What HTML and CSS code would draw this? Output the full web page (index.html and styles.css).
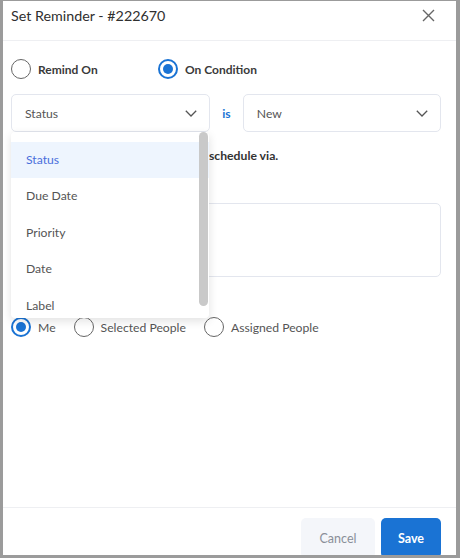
FILE: index.html
```html
<!DOCTYPE html>
<html lang="en">
<head>
    <meta charset="UTF-8">
    <meta name="viewport" content="width=device-width, initial-scale=1.0">
    <title>Set Reminder</title>
    <link rel="stylesheet" href="styles.css">
</head>
<body>
    <div class="modal">
        <div class="modal-header">
            <h2 class="modal-title">Set Reminder - #222670</h2>
            <button class="close-btn" aria-label="Close">
                <svg width="13" height="13" viewBox="0 0 13 13"><path d="M1 1 L12 12 M12 1 L1 12" stroke="#666" stroke-width="1.4" fill="none"/></svg>
            </button>
        </div>

        <div class="modal-body">
            <div class="radio-row top-row">
                <label class="radio radio-bold wide"><span class="circle"></span>Remind On</label>
                <label class="radio radio-bold"><span class="circle checked"></span>On Condition</label>
            </div>

            <div class="condition-row">
                <div class="select-wrap">
                    <div class="select">
                        <span>Status</span>
                        <svg width="12" height="7" viewBox="0 0 12 7"><path d="M0.8 0.8 L6 6 L11.2 0.8" stroke="#555" stroke-width="1.3" fill="none"/></svg>
                    </div>
                    <div class="dropdown">
                        <ul class="dropdown-list">
                            <li class="active">Status</li>
                            <li>Due Date</li>
                            <li>Priority</li>
                            <li>Date</li>
                            <li>Label</li>
                        </ul>
                        <div class="scroll-thumb"></div>
                    </div>
                </div>
                <span class="is">is</span>
                <div class="select">
                    <span>New</span>
                    <svg width="12" height="7" viewBox="0 0 12 7"><path d="M0.8 0.8 L6 6 L11.2 0.8" stroke="#555" stroke-width="1.3" fill="none"/></svg>
                </div>
            </div>

            <p class="section-label"><span class="hidden-part">Send the reminder for this task's </span>schedule via.</p>
            <div class="textbox"></div>

            <div class="radio-row notify-row">
                <label class="radio"><span class="circle checked"></span>Me</label>
                <label class="radio"><span class="circle"></span>Selected People</label>
                <label class="radio"><span class="circle"></span>Assigned People</label>
            </div>
        </div>

        <div class="modal-footer">
            <button class="btn btn-cancel">Cancel</button>
            <button class="btn btn-save">Save</button>
        </div>
    </div>
</body>
</html>
```

FILE: styles.css
```css
:root {
    --blue: #1a73d4;
    --text: #333;
    --muted: #555;
    --line: #e3e6ee;
}

* {
    box-sizing: border-box;
}

html, body {
    height: 100%;
}

body {
    margin: 0;
    padding: 1px 4px 3px 3px;
    background: #9b9b9b;
    font-family: Lato, 'Noto Sans', sans-serif;
    color: var(--text);
    overflow: hidden;
}

.modal {
    height: 100%;
    background: #fff;
    display: flex;
    flex-direction: column;
    overflow: hidden;
}

.modal-header {
    height: 40px;
    padding: 5px 21px 0 8px;
    display: flex;
    justify-content: space-between;
    align-items: flex-start;
    border-bottom: 1px solid #eeeff2;
}

.modal-title {
    margin: 0;
    font-size: 14.3px;
    line-height: 20px;
    font-weight: 400;
    color: #2f2f2f;
}

.close-btn {
    border: none;
    background: none;
    padding: 0;
    margin-top: 3px;
    cursor: pointer;
}

.modal-body {
    flex: 1;
    padding: 18px 15px 0 8px;
}

.radio-row {
    display: flex;
    align-items: center;
    height: 20px;
}

.radio {
    display: flex;
    align-items: center;
    gap: 7px;
    font-size: 12.2px;
    color: var(--muted);
    margin-right: 18px;
}

.radio-bold {
    font-size: 12px;
    font-weight: 700;
    color: #3a3a3a;
}

.wide {
    width: 147px;
    margin-right: 0;
}

.circle {
    width: 20px;
    height: 20px;
    border-radius: 50%;
    border: 1.5px solid #666;
    flex-shrink: 0;
    position: relative;
}

.circle.checked {
    border: 2px solid var(--blue);
}

.circle.checked::after {
    content: '';
    position: absolute;
    left: 3px;
    top: 3px;
    width: 10px;
    height: 10px;
    border-radius: 50%;
    background: var(--blue);
}

.condition-row {
    margin-top: 15px;
    display: flex;
    align-items: center;
}

.select-wrap {
    position: relative;
    width: 199px;
}

.select {
    width: 199px;
    height: 38px;
    border: 1px solid var(--line);
    border-radius: 5px;
    padding: 0 12px 0 13px;
    display: flex;
    justify-content: space-between;
    align-items: center;
    font-size: 12.2px;
    color: var(--muted);
}

.is {
    width: 33px;
    text-align: center;
    font-size: 12.2px;
    font-weight: 700;
    color: var(--blue);
}

.dropdown {
    position: absolute;
    top: 38px;
    left: 0;
    width: 198px;
    height: 186px;
    background: #fff;
    border-radius: 4px;
    box-shadow: 0 3px 10px rgba(0, 0, 0, 0.12);
    overflow: hidden;
    z-index: 5;
}

.dropdown-list {
    list-style: none;
    margin: 0;
    padding: 9.5px 0 0;
}

.dropdown-list li {
    height: 36.5px;
    line-height: 36.5px;
    padding-left: 15px;
    font-size: 12.2px;
    color: var(--muted);
}

.dropdown-list li.active {
    background: #eef5fe;
    color: #4a6fdc;
}

.scroll-thumb {
    position: absolute;
    top: 0;
    right: 1px;
    width: 9px;
    height: 174px;
    border-radius: 5px;
    background: #c9c9c9;
}

.section-label {
    margin: 15px 0 0;
    font-size: 12.2px;
    line-height: 18px;
    font-weight: 700;
    color: #333;
}

.hidden-part {
    display: inline-block;
    width: 198px;
    white-space: nowrap;
    overflow: hidden;
    vertical-align: top;
}

.textbox {
    margin-top: 38px;
    height: 74px;
    border: 1px solid var(--line);
    border-radius: 5px;
}

.notify-row {
    margin-top: 40px;
}

.modal-footer {
    border-top: 1px solid #eeeff2;
    padding: 10px 15px 0 8px;
    display: flex;
    justify-content: flex-end;
    gap: 6px;
    height: 48px;
}

.btn {
    height: 40px;
    border: none;
    border-radius: 5px;
    font-family: inherit;
    font-size: 12.5px;
    padding: 0;
}

.btn-cancel {
    width: 74px;
    background: #f4f6fa;
    color: #8a8f99;
}

.btn-save {
    width: 60px;
    background: var(--blue);
    color: #fff;
    font-weight: 700;
}
```
